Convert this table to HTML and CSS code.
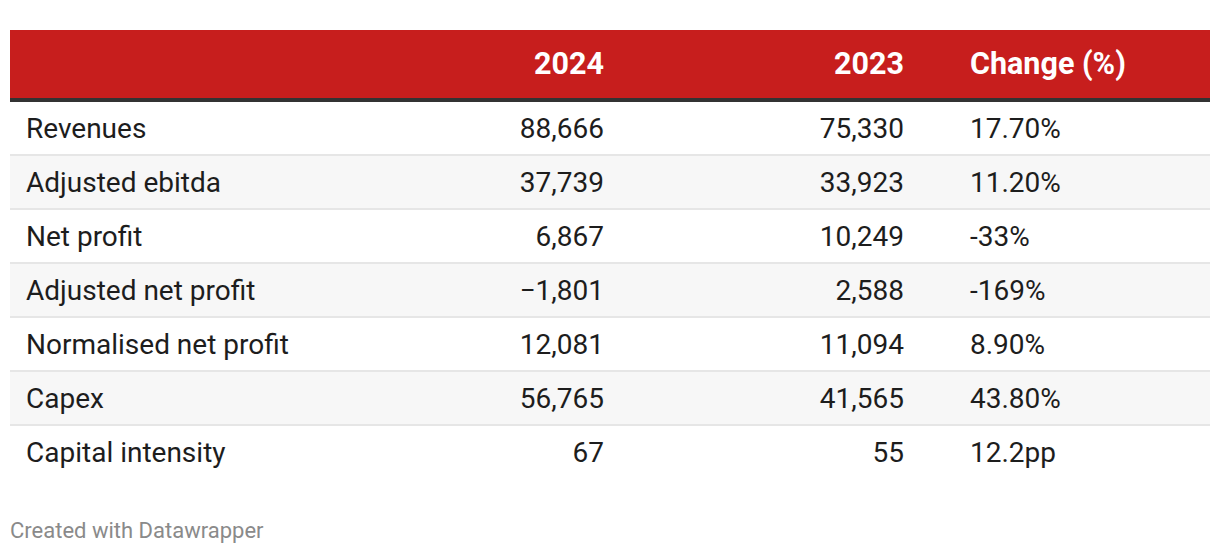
FILE: index.html
```html
<!DOCTYPE html>
<html>
<head>
<meta charset="utf-8">
<link rel="stylesheet" href="styles.css">
</head>
<body>
<div class="chart">
  <table class="data">
    <colgroup>
      <col class="c1"><col class="c2"><col class="c3"><col class="c4">
    </colgroup>
    <thead>
      <tr>
        <th class="label"></th>
        <th class="num">2024</th>
        <th class="num">2023</th>
        <th class="chg">Change (%)</th>
      </tr>
    </thead>
    <tbody>
      <tr><td class="label">Revenues</td><td class="num">88,666</td><td class="num">75,330</td><td class="chg">17.70%</td></tr>
      <tr class="alt"><td class="label">Adjusted ebitda</td><td class="num">37,739</td><td class="num">33,923</td><td class="chg">11.20%</td></tr>
      <tr><td class="label">Net profit</td><td class="num">6,867</td><td class="num">10,249</td><td class="chg">-33%</td></tr>
      <tr class="alt"><td class="label">Adjusted net profit</td><td class="num">−1,801</td><td class="num">2,588</td><td class="chg">-169%</td></tr>
      <tr><td class="label">Normalised net profit</td><td class="num">12,081</td><td class="num">11,094</td><td class="chg">8.90%</td></tr>
      <tr class="alt"><td class="label">Capex</td><td class="num">56,765</td><td class="num">41,565</td><td class="chg">43.80%</td></tr>
      <tr class="last"><td class="label">Capital intensity</td><td class="num">67</td><td class="num">55</td><td class="chg">12.2pp</td></tr>
    </tbody>
  </table>
  <div class="footer">Created with Datawrapper</div>
</div>
</body>
</html>
```
FILE: styles.css
```css
html, body {
  margin: 0;
  padding: 0;
  background: #ffffff;
}
body {
  font-family: Roboto, "Liberation Sans", Arial, sans-serif;
  color: #1d1d1d;
}
.chart {
  padding: 30px 10px 0 10px;
}
.data {
  width: 1200px;
  border-collapse: collapse;
  table-layout: fixed;
}
.c1 { width: 410px; }
.c2 { width: 200px; }
.c3 { width: 300px; }
.c4 { width: 290px; }
thead th {
  background: #c71e1d;
  color: #ffffff;
  font-weight: 700;
  font-size: 30.5px;
  height: 66px;
  padding: 0 0 2px 0;
  border-bottom: 4px solid #333333;
  vertical-align: middle;
}
thead th.num {
  padding-right: 16px;
}
thead th.chg {
  padding-left: 50px;
}
tbody td {
  font-size: 28px;
  height: 52px;
  padding: 0;
  border-bottom: 2px solid #e6e6e6;
  vertical-align: middle;
}
tbody tr.alt td {
  background: #f7f7f7;
}
tbody tr.last td {
  border-bottom: none;
}
.label {
  text-align: left;
  padding-left: 16px;
}
.num {
  text-align: right;
  padding-right: 16px;
}
.chg {
  text-align: left;
  padding-left: 50px;
}
.footer {
  margin-top: 40px;
  font-size: 22px;
  color: #8a8a8a;
  padding-left: 0;
}
```
